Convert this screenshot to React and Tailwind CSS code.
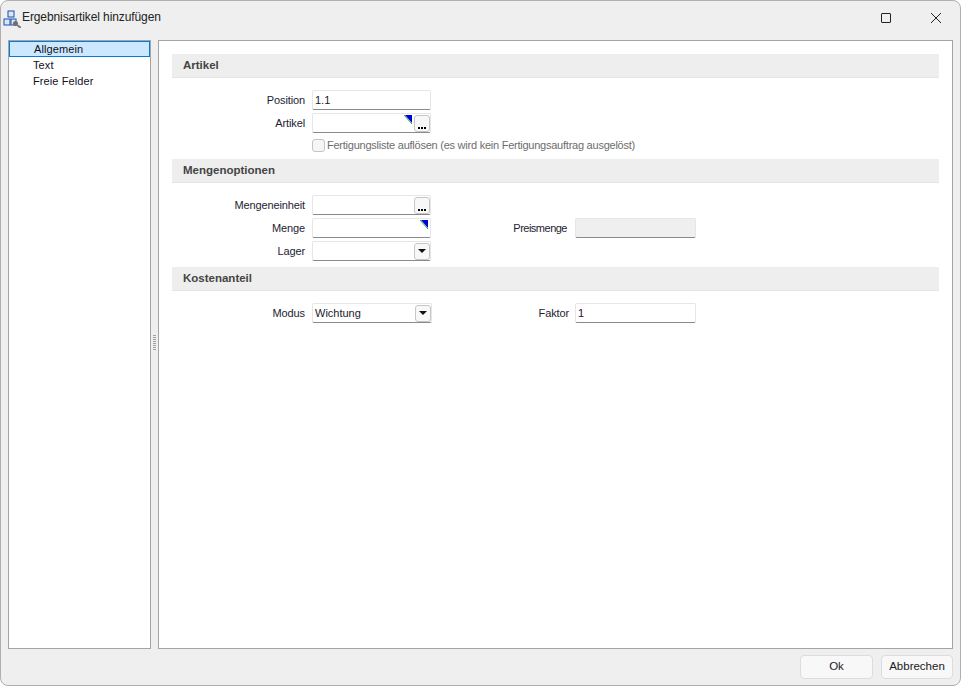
const font = { fontFamily: '"Liberation Sans", Arial, sans-serif' };

const Corner = ({ shifted }) => (
  <svg width="9" height="9" viewBox="0 0 9 9" className={`absolute top-[1px] ${shifted ? 'right-[17px]' : 'right-[1px]'}`}>
    <path d="M1 0H8V8Z" fill="#0000d8" />
    <path d="M0 0L8 9" stroke="#2f9e44" strokeWidth="1" />
  </svg>
);

const MiniButton = ({ kind }) => (
  <span className="absolute right-[0px] top-[1px] flex h-[17px] w-[16px] items-center justify-center rounded-[3px] border border-[#c6c6c6] bg-[#f8f8f8]">
    {kind === 'dots' ? (
      <span className="mt-[9px] flex gap-[1px]">
        <i className="h-[2px] w-[2px] bg-black" />
        <i className="h-[2px] w-[2px] bg-black" />
        <i className="h-[2px] w-[2px] bg-black" />
      </span>
    ) : (
      <svg width="8" height="4" viewBox="0 0 8 4"><path d="M0 0H8L4 4Z" fill="#111" /></svg>
    )}
  </span>
);

const Field = ({ value, corner, button, width = 'w-[119px]', disabled, textColor = 'text-[#1a1a2a]' }) => (
  <div className={`relative h-[20px] ${width} rounded-[2px] border border-[#e6e6e6] border-b-[#8a8a8a] ${disabled ? 'bg-[#efefef]' : 'bg-white'} pl-[2px] text-[11px] leading-[18px] ${textColor}`}>
    {value}
    {corner && <Corner shifted={!!button} />}
    {button && <MiniButton kind={button} />}
  </div>
);

const Label = ({ children, className = 'w-[133px] tracking-[-0.12px]' }) => (
  <span className={`${className} mt-[1px] text-right text-[11px] leading-[19px] text-[#1c2333]`}>{children}</span>
);

const Row = ({ label, children }) => (
  <div className="flex h-[19px] items-center gap-[7px]">
    <Label>{label}</Label>
    {children}
  </div>
);

const Section = ({ title }) => (
  <div className="flex h-[24px] items-center border-b border-[#e4e4e4] bg-[#eeeeee] pl-[11px] pt-[1px] text-[11.5px] font-bold text-[#444444]">
    {title}
  </div>
);

const TreeItem = ({ children, active }) => (
  <div className={`flex h-[16px] items-center pl-[24px] text-[11px] tracking-[0.1px] text-[#111122] ${active ? 'border border-[#0a78d7] bg-[#cce8ff] pl-[23px]' : ''}`}>
    {children}
  </div>
);

const App = () => {
  return (
    <div style={font} className="flex h-[686px] w-[961px] flex-col overflow-hidden rounded-[8px] border border-[#b0b0b0] bg-[#efefef]">
      {/* Titelleiste */}
      <div className="flex h-[39px] shrink-0 items-center pl-[2px]">
        <svg width="18" height="18" viewBox="0 0 18 18" className="mt-[-4px]">
          <rect x="5" y="1" width="6" height="6" fill="#dbe7f7" stroke="#1c4fa8" />
          <rect x="1" y="9" width="6" height="6" fill="#dbe7f7" stroke="#1c4fa8" />
          <rect x="8" y="9" width="5" height="6" fill="#dbe7f7" stroke="#1c4fa8" />
          <circle cx="12.5" cy="13.5" r="2.5" fill="#6f6f6f" />
          <path d="M14 15L18 18" stroke="#7a7a7a" strokeWidth="2" />
        </svg>
        <span className="ml-[1px] mt-[-7px] text-[12px] tracking-[-0.1px] text-[#222222]">Ergebnisartikel hinzufügen</span>
        <div className="ml-auto mr-[18px] mt-[-6px] flex items-center gap-[39px]">
          <span className="h-[10px] w-[10px] rounded-[1px] border border-[#222222]" />
          <svg width="12" height="12" viewBox="0 0 12 12"><path d="M1 1L11 11M11 1L1 11" stroke="#222" strokeWidth="1" /></svg>
        </div>
      </div>

      {/* Inhalt */}
      <div className="flex h-[609px] shrink-0 pl-[7px] pr-[7px]">
        <div className="w-[143px] border border-[#a4a4a4] bg-white">
          <TreeItem active>Allgemein</TreeItem>
          <TreeItem>Text</TreeItem>
          <TreeItem>Freie Felder</TreeItem>
        </div>

        <div className="flex w-[7px] items-center justify-center">
          <span className="-mt-[5px] flex flex-col gap-[1px]">
            {[0, 1, 2, 3, 4, 5, 6, 7].map((i) => (
              <i key={i} className="h-[1px] w-[3px] bg-[#a0a0a0]" />
            ))}
          </span>
        </div>

        <div className="flex-1 border border-[#a4a4a4] bg-white px-[13px] pt-[13px]">
          <Section title="Artikel" />
          <div className="flex flex-col gap-[4px] pt-[12px]">
            <Row label="Position"><Field value="1.1" /></Row>
            <Row label="Artikel">
              <Field corner button="dots" />
            </Row>
          </div>
          <div className="ml-[140px] mt-[7px] flex h-[13px] items-center gap-[2px] text-[11px] leading-[13px] tracking-[-0.24px] text-[#6d6d6d]">
            <span className="h-[13px] w-[13px] rounded-[3px] border border-[#c4c4c4] bg-[#f6f6f6]" />
            Fertigungsliste auflösen (es wird kein Fertigungsauftrag ausgelöst)
          </div>

          <div className="mt-[7px]"><Section title="Mengenoptionen" /></div>
          <div className="flex pt-[12px]">
            <div className="flex flex-col gap-[4px]">
              <Row label="Mengeneinheit"><Field button="dots" /></Row>
              <Row label="Menge"><Field corner /></Row>
              <Row label="Lager"><Field button="arrow" /></Row>
            </div>
            <div className="ml-[74px] mt-[23px] flex h-[19px] items-center gap-[8px]">
              <Label className="w-[62px] tracking-[-0.5px]">Preismenge</Label>
              <Field disabled width="w-[121px]" />
            </div>
          </div>

          <div className="mt-[7px]"><Section title="Kostenanteil" /></div>
          <div className="flex pt-[12px]">
            <Row label="Modus"><Field value="Wichtung" button="arrow" width="w-[120px]" /></Row>
            <div className="ml-[73px] flex h-[19px] items-center gap-[6px]">
              <Label className="w-[64px] tracking-[-0.12px]">Faktor</Label>
              <Field value="1" width="w-[121px]" textColor="text-[#2a0a3a]" />
            </div>
          </div>
        </div>
      </div>

      {/* Fusszeile */}
      <div className="flex flex-1 items-start justify-end gap-[8px] pr-[7px] pt-[6px]">
        <button className="h-[24px] w-[73px] rounded-[4px] border border-[#dcdcdc] bg-[#f8f8f8] text-[11.5px] text-[#1a1a1a]">Ok</button>
        <button className="h-[24px] w-[72px] rounded-[4px] border border-[#dcdcdc] bg-[#f8f8f8] text-[11.5px] text-[#1a1a1a]">Abbrechen</button>
      </div>
    </div>
  );
};

export default App;
